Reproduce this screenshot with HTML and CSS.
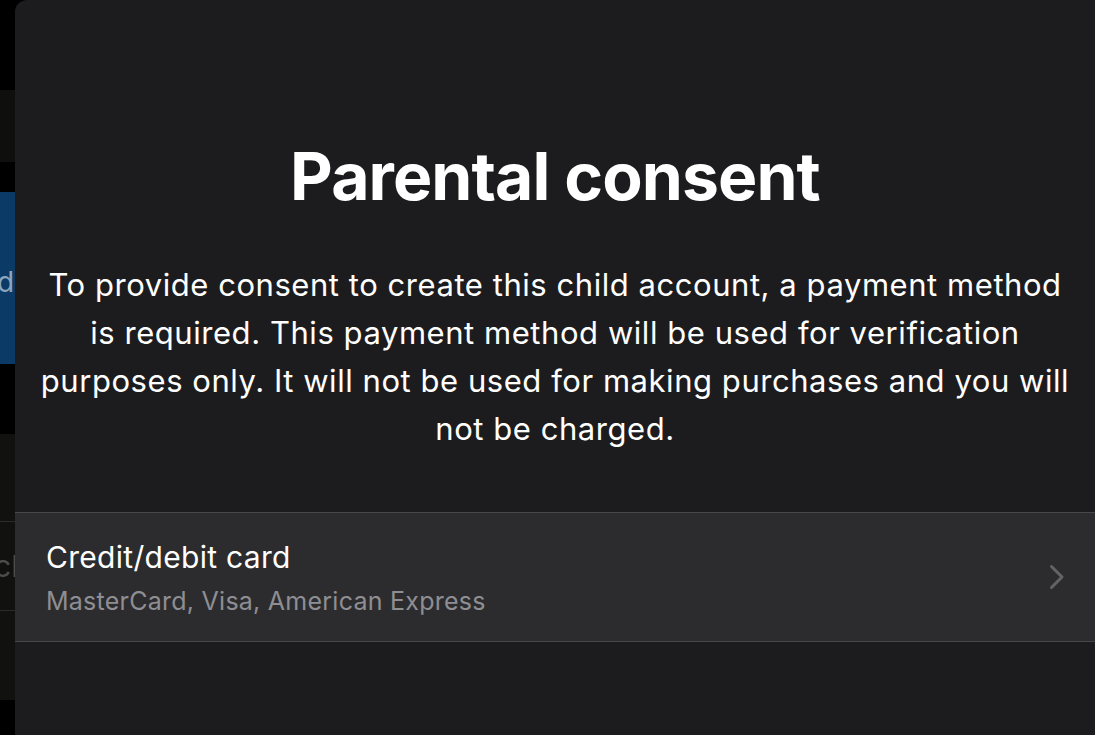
FILE: index.html
```html
<!DOCTYPE html>
<html lang="en">
<head>
  <meta charset="UTF-8">
  <meta name="viewport" content="width=device-width, initial-scale=1.0">
  <title>Parental consent</title>
  <link rel="stylesheet" href="styles.css">
</head>
<body>
  <div class="screen">
    <div class="backdrop">
      <div class="bd-black bd-top"></div>
      <div class="bd-bar"></div>
      <div class="bd-black bd-gap"></div>
      <div class="bd-blue"><span>d</span></div>
      <div class="bd-black bd-gap2"></div>
      <div class="bd-list">
        <div class="bd-row bd-row-first"></div>
        <div class="bd-row bd-row-text"><span>ch</span></div>
        <div class="bd-row bd-row-last"></div>
      </div>
      <div class="bd-black bd-bottom"></div>
    </div>

    <div class="sheet">
      <h1 class="sheet-title">Parental consent</h1>
      <p class="sheet-text">
        To provide consent to create this child account, a payment method<br>
        is required. This payment method will be used for verification<br>
        purposes only. It will not be used for making purchases and you will<br>
        not be charged.
      </p>

      <div class="option-list">
        <a class="option" href="#">
          <div class="option-text">
            <span class="option-title">Credit/debit card</span>
            <span class="option-sub">MasterCard, Visa, American Express</span>
          </div>
          <svg class="chevron" width="16" height="26" viewBox="0 0 16 26">
            <path d="M2.5 2.5 L13 13 L2.5 23.5" fill="none" stroke="#636366" stroke-width="3" stroke-linecap="round" stroke-linejoin="round"/>
          </svg>
        </a>
      </div>
    </div>
  </div>
</body>
</html>
```

FILE: styles.css
```css
:root {
  --sheet-bg: #1c1c1e;
  --cell-bg: #2c2c2e;
  --separator: #48484a;
  --text: #ffffff;
  --secondary: #8e8e93;
}

* {
  box-sizing: border-box;
}

html, body {
  margin: 0;
  padding: 0;
  background: #000;
  height: 100%;
}

body {
  font-family: Inter, "Noto Sans", "Liberation Sans", sans-serif;
  color: var(--text);
  overflow: hidden;
}

.screen {
  display: flex;
  height: 735px;
}

/* what peeks out behind the sheet */
.backdrop {
  width: 15px;
  flex: 0 0 15px;
  display: flex;
  flex-direction: column;
  overflow: hidden;
}

.bd-black { background: #000; }
.bd-top { height: 90px; }
.bd-bar { height: 72px; background: #0f0f0e; }
.bd-gap { height: 30px; }
.bd-gap2 { height: 70px; }
.bd-bottom { flex: 1; }

.bd-blue {
  height: 172px;
  background: #0b3a66;
  display: flex;
  align-items: center;
  padding-top: 8px;
}

.bd-blue span {
  font-size: 28px;
  color: #8da6bf;
  margin-left: -3px;
}

.bd-list {
  height: 266px;
  background: #11110f;
  display: flex;
  flex-direction: column;
}

.bd-row-first { height: 88px; border-bottom: 1px solid #2b2b2a; }
.bd-row-text {
  height: 89px;
  border-bottom: 1px solid #2b2b2a;
  display: flex;
  align-items: center;
}
.bd-row-text span {
  font-size: 30px;
  color: #4c4c4a;
  margin-left: -6px;
}
.bd-row-last { flex: 1; }

/* sheet */
.sheet {
  flex: 1;
  background: var(--sheet-bg);
  border-top-left-radius: 12px;
  display: flex;
  flex-direction: column;
}

.sheet-title {
  margin: 136px 0 0;
  font-size: 66px;
  font-weight: 700;
  line-height: 80px;
  letter-spacing: -0.9px;
  text-align: center;
}

.sheet-text {
  margin: 45px 0 0;
  font-size: 31px;
  line-height: 48px;
  text-align: center;
  letter-spacing: 0.55px;
}

.option-list {
  margin-top: 59px;
  border-top: 1px solid var(--separator);
  border-bottom: 1px solid var(--separator);
  background: var(--cell-bg);
}

.option {
  display: flex;
  align-items: center;
  height: 128px;
  padding: 0 30px 0 31px;
  text-decoration: none;
  color: inherit;
}

.option-text {
  flex: 1;
  display: flex;
  flex-direction: column;
  gap: 9px;
}

.option-title {
  font-size: 30px;
  line-height: 38px;
  letter-spacing: 0.3px;
}

.option-sub {
  font-size: 25px;
  line-height: 32px;
  color: var(--secondary);
  letter-spacing: 0.25px;
}

.chevron {
  display: block;
}
```
